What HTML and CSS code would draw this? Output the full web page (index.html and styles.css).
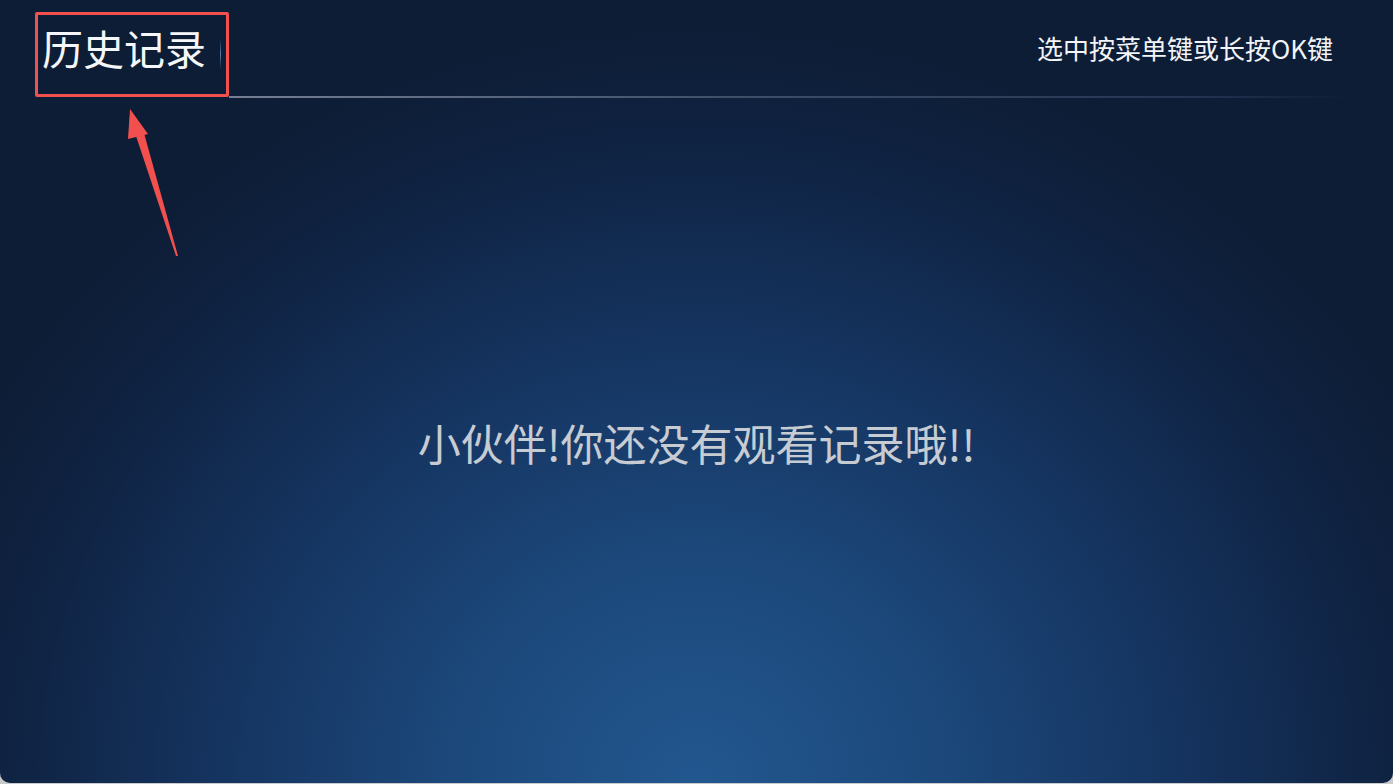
FILE: index.html
```html
<!DOCTYPE html>
<html lang="zh-CN">
<head>
  <meta charset="UTF-8" />
  <meta name="viewport" content="width=device-width, initial-scale=1.0" />
  <title>历史记录</title>
  <link rel="stylesheet" href="styles.css">
</head>
<body>
  <div class="screen">
    <div class="header">
      <div class="title-box">
        <h1 class="title">历史记录</h1>
        <span class="caret"></span>
      </div>
      <div class="hint">选中按菜单键或长按OK键</div>
    </div>
    <div class="divider"></div>

    <div class="empty">
      <p>小伙伴!你还没有观看记录哦!!</p>
    </div>

    <svg class="arrow" width="300" height="270" viewBox="0 0 300 270">
      <polygon points="136,136 144,133 178,256 176,256" fill="#f24f4f" />
      <polygon points="130,109 148,134 128,139" fill="#f24f4f" />
    </svg>
  </div>
</body>
</html>
```

FILE: styles.css
```css
* {
  margin: 0;
  padding: 0;
  box-sizing: border-box;
  font-family: "Noto Sans CJK SC", "Noto Sans", sans-serif;
}

body {
  background-color: #c9cacc;
}

.screen {
  position: relative;
  width: 1393px;
  height: 783px;
  display: flex;
  flex-direction: column;
  overflow: hidden;
  border-radius: 0 0 10px 10px;
  background: radial-gradient(ellipse 820px 760px at 50% 100%, #22578f 0%, #1c487b 30%, #153460 58%, #0f2241 85%, #0e1d36 100%);
}

.header {
  display: flex;
  justify-content: space-between;
  align-items: flex-start;
  padding: 12px 60px 0 35px;
}

.title-box {
  position: relative;
  z-index: 1;
  display: flex;
  width: 194px;
  height: 85px;
  border: 3px solid #f24f4f;
  border-radius: 2px;
  padding: 8px 0 0 4px;
}

.title {
  font-size: 41px;
  font-weight: normal;
  line-height: 1.2;
  color: #f4f6f8;
}

.caret {
  display: block;
  width: 1px;
  height: 30px;
  margin: 16px 0 0 14px;
  background: linear-gradient(to bottom, rgba(90, 150, 210, 0), rgba(110, 170, 230, 0.7), rgba(90, 150, 210, 0));
}

.hint {
  margin-top: 20px;
  font-size: 26px;
  line-height: 1.2;
  color: #f2f4f7;
}

.divider {
  height: 2px;
  margin: -1px 43px 0 229px;
  background: linear-gradient(to right, rgba(150, 160, 180, 0.75) 0%, rgba(120, 135, 160, 0.45) 45%, rgba(90, 110, 150, 0.3) 85%, rgba(90, 110, 150, 0) 100%);
}

.empty {
  flex: 1;
  display: flex;
  align-items: center;
  justify-content: center;
  padding-top: 4px;
}

.empty p {
  font-size: 43px;
  line-height: 1.2;
  color: #c7ccd3;
}

.arrow {
  position: absolute;
  left: 0;
  top: 0;
}
```
